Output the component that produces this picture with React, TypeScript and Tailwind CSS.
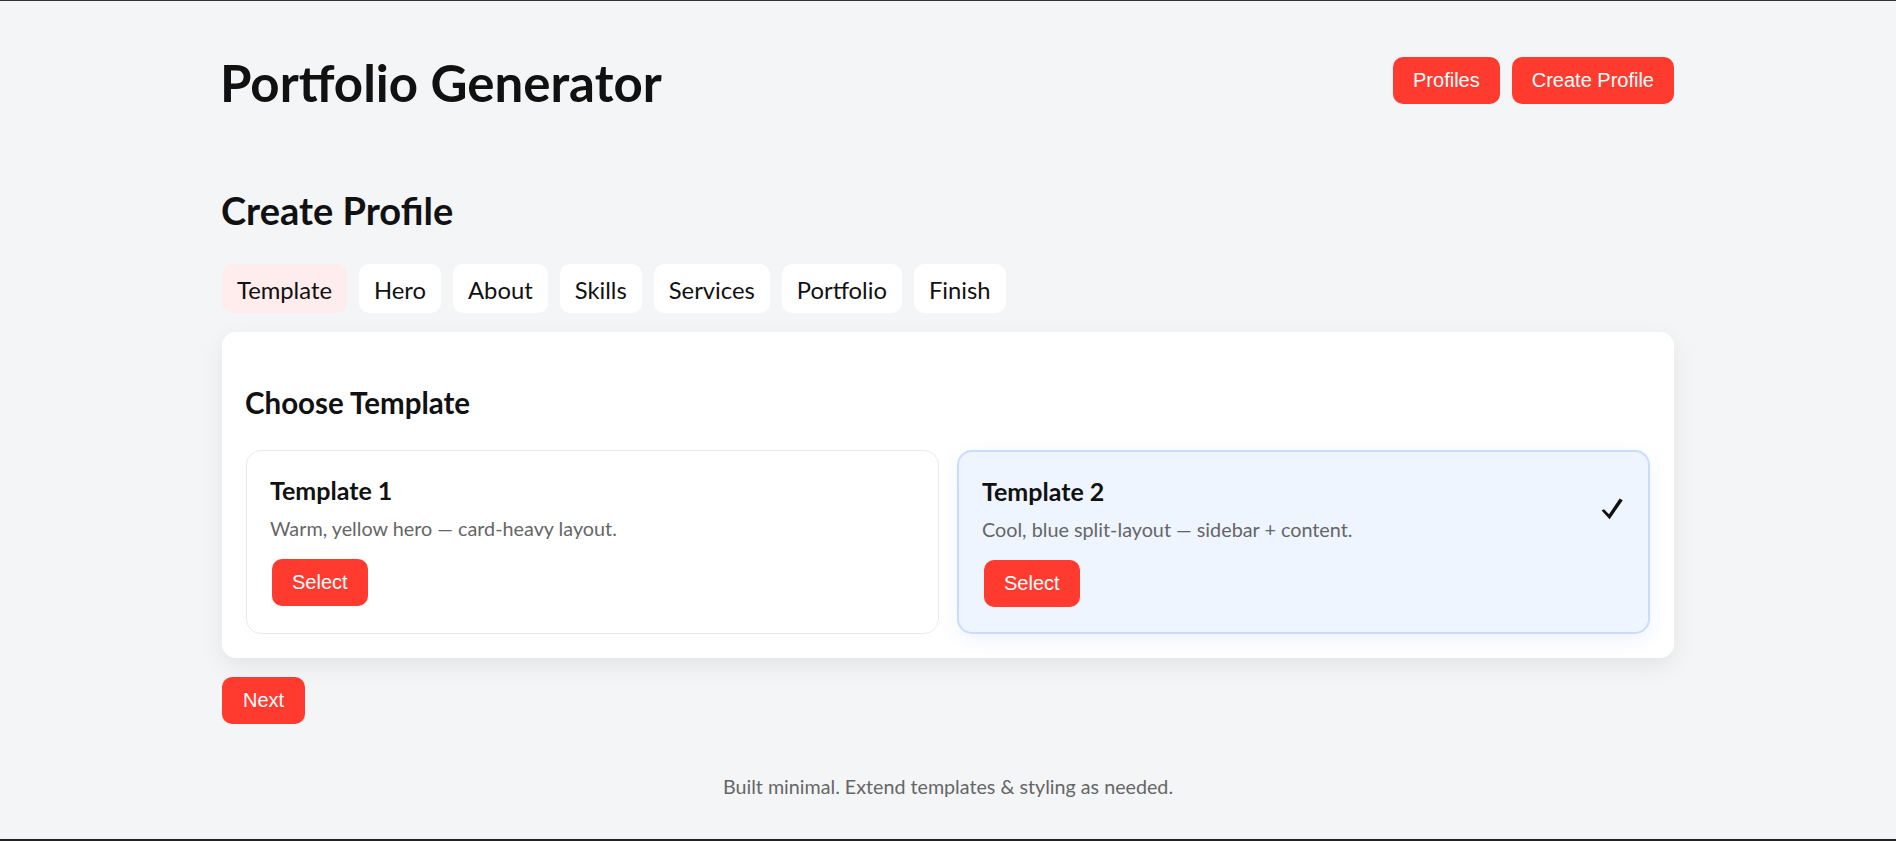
import { useState } from "react";

interface Template {
  id: number;
  name: string;
  description: string;
}

const templates: Template[] = [
  { id: 1, name: "Template 1", description: "Warm, yellow hero — card-heavy layout." },
  { id: 2, name: "Template 2", description: "Cool, blue split-layout — sidebar + content." },
];

const steps = ["Template", "Hero", "About", "Skills", "Services", "Portfolio", "Finish"];

const btn =
  "bg-[#ff3b30] text-white font-['Liberation_Sans',Arial,sans-serif] text-[20px] leading-[23px] py-3 rounded-[10px]";

function CheckMark() {
  return (
    <svg width="22" height="22" viewBox="0 0 22 22" aria-label="selected">
      <path d="M0.6 12.6 L3 11.2 L8 16.2 L18.6 0.6 L21.8 2.2 L8.6 21.2 Z" fill="#111" />
    </svg>
  );
}

export default function App() {
  const [step, setStep] = useState(0);
  const [selected, setSelected] = useState(2);

  return (
    <div className="min-h-screen flex flex-col bg-[#f4f5f7] border-t border-[#333] text-[#111] font-[Lato,sans-serif]">
      <div className="w-full max-w-[1452px] mx-auto pt-[56px]">
        <header className="h-[47px] flex items-center justify-between">
          <h1 className="text-[51px] leading-none font-bold mt-[3px] -ml-[2px]">Portfolio Generator</h1>
          <nav className="flex gap-3">
            <button className={`${btn} px-5`}>Profiles</button>
            <button className={`${btn} px-5`}>Create Profile</button>
          </nav>
        </header>

        <h2 className="mt-[87px] text-[38px] leading-none font-bold -ml-[1px]">Create Profile</h2>

        <div className="mt-[35px] flex gap-3">
          {steps.map((s, i) => (
            <button
              key={s}
              onClick={() => setStep(i)}
              className={`h-[49px] px-[15px] pt-[4px] rounded-[10px] text-[23.8px] leading-none ${
                i === step ? "bg-[#ffecec]" : "bg-white"
              }`}
            >
              {s}
            </button>
          ))}
        </div>

        <section className="mt-[19px] bg-white rounded-[14px] px-6 pt-[56px] pb-6 shadow-[0_8px_24px_rgba(0,0,0,0.07)]">
          <h3 className="text-[29.5px] leading-none font-bold -ml-[1px]">Choose Template</h3>
          <div className="mt-8 grid grid-cols-2 gap-[18px]">
            {templates.map((t) => {
              const active = selected === t.id;
              return (
                <div
                  key={t.id}
                  className={`rounded-[15px] px-[25px] pt-[24px] pb-[25px] ${
                    active
                      ? "border-2 border-[#cadcfc] bg-[#eef5ff] shadow-[0_6px_20px_rgba(37,99,235,0.08)]"
                      : "border border-[#e9eaee] bg-white"
                  }`}
                >
                  <div className="flex items-center justify-between">
                    <div className="-ml-[2px]">
                      <h4 className="text-[25px] leading-[31px] font-bold">{t.name}</h4>
                      <p className="mt-[9px] text-[19.8px] leading-[27px] text-[#666]">{t.description}</p>
                    </div>
                    {active && <CheckMark />}
                  </div>
                  <button onClick={() => setSelected(t.id)} className={`${btn} px-5 mt-[17px]`}>
                    Select
                  </button>
                </div>
              );
            })}
          </div>
        </section>

        <button onClick={() => setStep((s) => Math.min(s + 1, steps.length - 1))} className={`${btn} px-[21px] mt-[19px]`}>
          Next
        </button>

        <footer className="mt-[53px] text-center text-[19.7px] leading-none text-[#666]">
          Built minimal. Extend templates &amp; styling as needed.
        </footer>
      </div>
      <div className="flex-1" />
      <div className="h-[2px] bg-[#222]" />
    </div>
  );
}
